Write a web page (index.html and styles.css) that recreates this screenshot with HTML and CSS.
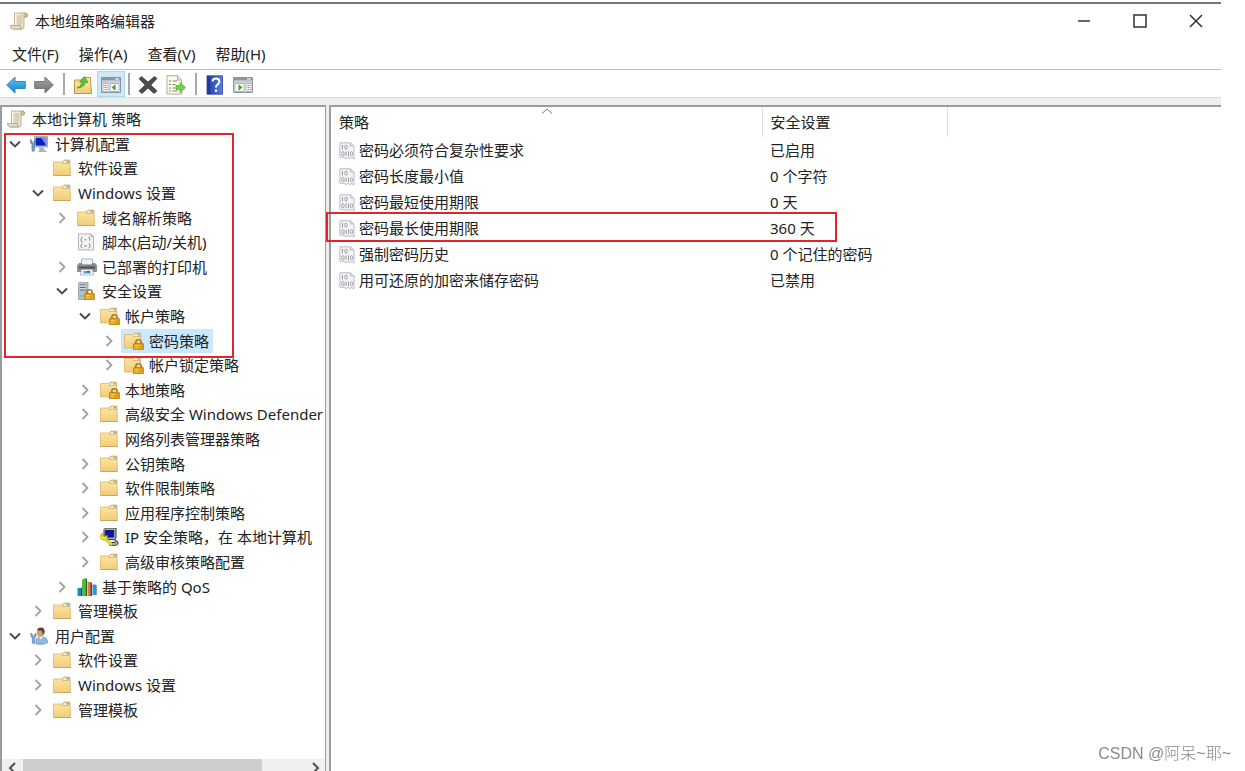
FILE: index.html
```html
<!DOCTYPE html>
<html lang="zh-CN">
<head>
  <meta charset="UTF-8" />
  <meta name="viewport" content="width=device-width, initial-scale=1" />
  <title>本地组策略编辑器</title>
  <link rel="stylesheet" href="styles.css">
</head>
<body>

  <!-- Shared icons -->
  <svg class="sprite" aria-hidden="true">
    <defs>
      <linearGradient id="g-folder" x1="0" y1="0" x2="0" y2="1">
        <stop offset="0" stop-color="#ffe7a6" /><stop offset="1" stop-color="#f2cc78" />
      </linearGradient>
      <linearGradient id="g-paper" x1="0" y1="0" x2="1" y2="0">
        <stop offset="0" stop-color="#fffdf3" /><stop offset="1" stop-color="#e6d5ad" />
      </linearGradient>
      <linearGradient id="g-blue" x1="0" y1="0" x2="0" y2="1">
        <stop offset="0" stop-color="#5cc4f2" /><stop offset="1" stop-color="#1287d0" />
      </linearGradient>
      <linearGradient id="g-gray" x1="0" y1="0" x2="0" y2="1">
        <stop offset="0" stop-color="#a8a8a8" /><stop offset="1" stop-color="#6e6e6e" />
      </linearGradient>
      <linearGradient id="g-help" x1="0" y1="0" x2="1" y2="0">
        <stop offset="0" stop-color="#1f3da8" /><stop offset="1" stop-color="#5c80e0" />
      </linearGradient>
      <symbol id="i-scroll" viewBox="0 0 18 18">
        <path d="M4.500 1h11q2 0 2 2t-1.500 2H14v9.500q0 2.500-2.500 2.500H3.500l1-3z" fill="url(#g-paper)" stroke="#b3a078" stroke-width=".8" />
        <path d="M14 5V3q0-2 1.500-2t2 2-1.500 2z" fill="#d8c188" stroke="#a89163" stroke-width=".6" />
        <path d="M.5 13.500h10q0 3.500 1.500 3.500H3Q.5 17 .5 13.500z" fill="#e5ddc8" stroke="#a99c80" stroke-width=".8" />
        <path d="M6.500 4h5.500M6.500 6h5.500M6.500 8h5.500M6.500 10h5.500M6.500 12h4.500" stroke="#a9a493" stroke-width=".8" />
      </symbol>
      <symbol id="i-folder" viewBox="0 0 18 18">
        <path d="M.5 3h8.500l2-2h6v3l.5 12.500H.5z" fill="url(#g-folder)" stroke="#dcb56a" stroke-width=".8" />
        <path d="M9.500 3.500l1.500-2h5.500v3H9z" fill="#f7edcf" stroke="#c5a15b" stroke-width=".6" />
        <path d="M13.500 2.800h2.500" stroke="#4aa3c7" stroke-width="1.200" />
        <path d="M.5 16.500h17" stroke="#c9a562" />
      </symbol>
      <symbol id="i-lock" viewBox="0 0 10 11">
        <path d="M2.500 6V3.500a2.500 2.500 0 0 1 5 0V6" fill="none" stroke="#9b7420" stroke-width="1.300" />
        <rect x=".5" y="4.500" width="9" height="6" rx=".5" fill="#dfa31c" stroke="#a9770c" stroke-width=".7" />
        <path d="M1.500 6.500h4M1.500 8.500h3" stroke="#ffd870" stroke-width=".8" />
      </symbol>
      <symbol id="i-folder-lock" viewBox="0 0 20 18">
        <path d="M.5 2.500h8l2-1.500h6v3l.5 12H.5z" fill="url(#g-folder)" stroke="#dcb56a" stroke-width=".8" />
        <path d="M9.500 3.500l1.500-2h5.500v3H9z" fill="#f7edcf" stroke="#c5a15b" stroke-width=".6" />
        <path d="M13.500 2.800h2" stroke="#4aa3c7" stroke-width="1.200" />
        <use href="#i-lock" x="9" y="6.500" width="11" height="12" />
      </symbol>
      <symbol id="i-server" viewBox="0 0 18 18">
        <path d="M1.500 1l2-1h7.500v14l-2 3.500H1.500z" fill="#b4c2cc" stroke="#8794a0" stroke-width=".7" />
        <path d="M3 3h5.500M3 5.500h5.500M3 8h5.500" stroke="#566977" stroke-width="1.100" />
        <path d="M3 4h5.500M3 6.500h5.500" stroke="#e7eff4" stroke-width=".7" />
        <path d="M3 14h3" stroke="#51c3dd" stroke-width="1.500" />
        <use href="#i-lock" x="7" y="6.500" width="11" height="12" />
      </symbol>
      <symbol id="i-computer" viewBox="0 0 18 18">
        <path d="M4.500 1.500h13v10.500h-13z" fill="#cdd7e4" stroke="#8b96a8" stroke-width=".8" />
        <path d="M5.700 2.700h10.600v8H5.700z" fill="#0b1fc4" />
        <path d="M11 2.700h5.300v8z" fill="#7688ee" />
        <path d="M9 12.500h5v2l3.500 2.500H8l1.500-2z" fill="#aab4c0" />
        <path d="M.7 4.500V8L2 9.500v6q1.200 2 2.400 0v-6L5.700 8V4.500L4.300 6v2H2.100V6z" fill="#7ba5ce" stroke="#456e98" stroke-width=".7" />
      </symbol>
      <symbol id="i-script" viewBox="0 0 18 18">
        <path d="M1.500 1H14l2.500 2.500V17H1.500z" fill="#f5f5f6" stroke="#aaaaad" stroke-width=".9" />
        <path d="M14 1v2.500h2.500" fill="none" stroke="#999" stroke-width=".7" />
        <path d="M5.500 4q-1.500 0-1 2l-1 .8 1 .8q-.5 1.900 1 1.900M11.500 4q1.500 0 1 2l1 .8-1 .8M7.500 6.800h2M5.500 11q-1.500 0-1.300 1.300l-.8.700.8.700q0 1.300 1.300 1.300M11.500 11q1.500 0 1.300 1.300l.8.700-.8.700q0 1.300-1.300 1.300M7 13h3" fill="none" stroke="#777" stroke-width=".9" />
      </symbol>
      <symbol id="i-printer" viewBox="0 0 20 18">
        <path d="M4.500 1h11v6h-11z" fill="#eef4f7" stroke="#9aa3a9" stroke-width=".8" />
        <path d="M2 5.500h2.500V7h11V5.500H18l1.500 2v6H.5v-6z" fill="#8a9094" stroke="#6d7275" stroke-width=".7" />
        <path d="M2 8.500h16v2H2z" fill="#4b5052" />
        <path d="M4.500 11.500h11l1 5.500h-13z" fill="#f3f9fc" stroke="#9aa3a9" stroke-width=".7" />
        <path d="M6.500 13h7v2.500h-7z" fill="#58a7c8" />
        <path d="M10 13h3v1.500h-3z" fill="#286d8d" />
      </symbol>
      <symbol id="i-ipsec" viewBox="0 0 20 18">
        <path d="M4 1.500L5.500 0H16v10l-1.500 1.500H4z" fill="#aeb1b6" stroke="#383b42" />
        <path d="M5.700 2.500h8v6.500h-8z" fill="#0a12c8" stroke="#161838" />
        <path d="M15 11.500l3 2.500v2l-2.500 1.500H10v-3h5z" fill="#a8a9a8" stroke="#484a4c" />
        <path d="M.5 8.500q0-3.500 3-3.500l-.7 3 2 .7L7 7q1 2-.5 3.500l6.500 5.500-1.500 1.800L5 12Q.5 12.500.5 8.500z" fill="#f6ed1c" stroke="#9b9611" stroke-width=".7" />
      </symbol>
      <symbol id="i-qos" viewBox="0 0 20 18">
        <path d="M.5 10h4v8h-4z" fill="#1688cc" /><path d="M4 9.500l1.500.8V18H4z" fill="#094770" />
        <path d="M5 1.500L8.500 0v18H5z" fill="#53ba48" /><path d="M8.500 0l1.500 1v17H8.500z" fill="#18632c" />
        <path d="M10.500 4h3.500v14h-3.500z" fill="#ec7445" /><path d="M13.500 4l1.500 1v13h-1.500z" fill="#81341d" />
        <path d="M15.500 6.500h3V17h-3z" fill="#269be0" /><path d="M18.500 6.500l1 1V17h-1z" fill="#0b4772" />
      </symbol>
      <symbol id="i-user" viewBox="0 0 18 18">
        <path d="M6 17q-.5-7 4-7h2q5.500 0 5.500 5.500Q15 18 6 17z" fill="#8bbbe3" stroke="#5c8bb6" stroke-width=".7" />
        <path d="M9 10l2 2.500 2-3z" fill="#f4f8fb" />
        <ellipse cx="10" cy="5.700" rx="3" ry="4.300" fill="#d6a071" />
        <path d="M7 3.500Q7.500.4 11 .4q4.300 0 3.600 5.600L12.500 9q.5-5-1.500-5.500z" fill="#5b432f" />
        <path d="M1 6v3.500L2.300 11v5q1.200 1.700 2.400 0v-5L6 9.500V6L4.600 7.300v1.900H2.400V7.300z" fill="#86abd0" stroke="#4e7499" stroke-width=".6" />
      </symbol>
      <symbol id="i-policy" viewBox="0 0 16 18">
        <path d="M1 .8h10.500L15 4v13.200l-2-1.700-2 1-2-1-2 1-2-1.500-2 .7L.8 15z" fill="#f3f3f5" stroke="#b4b4b8" stroke-width=".9" />
        <path d="M11.500.8V4H15" fill="#ddd" stroke="#b4b4b8" stroke-width=".7" />
        <path d="M3.500 3v4.500M9.500 9.500V14" stroke="#9c9ca8" />
        <ellipse cx="7" cy="5.200" rx="1.300" ry="2" fill="none" stroke="#9c9ca8" stroke-width=".9" />
        <ellipse cx="3.900" cy="11.700" rx="1.300" ry="2" fill="none" stroke="#9c9ca8" stroke-width=".9" />
        <path d="M7 9.500V14" stroke="#9c9ca8" />
        <ellipse cx="12.500" cy="11.700" rx="1.200" ry="2" fill="none" stroke="#9c9ca8" stroke-width=".9" />
      </symbol>
      <symbol id="i-open" viewBox="0 0 16 16">
        <path d="M3 5.500l5 5 5-5" fill="none" stroke="#484848" stroke-width="1.900" />
      </symbol>
      <symbol id="i-closed" viewBox="0 0 16 16">
        <path d="M5.500 3L10.500 8l-5 5" fill="none" stroke="#a0a0a0" stroke-width="1.800" />
      </symbol>
    </defs>
  </svg>

  <div class="window">
    <header class="titlebar">
      <svg class="icon"><use href="#i-scroll" /></svg>
      <h1>本地组策略编辑器</h1>
      <div class="window-buttons">
        <button type="button" aria-label="最小化"><svg viewBox="0 0 14 14"><path d="M1 7h12" /></svg></button>
        <button type="button" aria-label="最大化"><svg viewBox="0 0 14 14"><path d="M1 1h12v12H1z" /></svg></button>
        <button type="button" aria-label="关闭"><svg viewBox="0 0 14 14"><path d="M1 1l12 12M13 1L1 13" /></svg></button>
      </div>
    </header>

    <nav class="menubar">
      <button type="button">文件(F)</button>
      <button type="button">操作(A)</button>
      <button type="button">查看(V)</button>
      <button type="button">帮助(H)</button>
    </nav>

    <div class="toolbar">
      <button type="button" aria-label="后退">
        <svg viewBox="0 0 20 20"><path d="M.7 10L9 2v4.500h10.300v7H9V18z" fill="url(#g-blue)" stroke="#2b82b8" stroke-width=".9" /></svg>
      </button>
      <button type="button" aria-label="前进">
        <svg viewBox="0 0 20 20"><path d="M19.300 10L11 2v4.500H.7v7H11V18z" fill="url(#g-gray)" stroke="#707070" stroke-width=".9" /></svg>
      </button>
      <span class="separator"></span>
      <button type="button" aria-label="上一级">
        <svg viewBox="0 0 20 20">
          <path d="M1.500 5h7l2-2.500h7v3l1 13h-17z" fill="url(#g-folder)" stroke="#b98c3c" stroke-width=".9" />
          <path d="M4 13q4-1 5-6L6.500 7 11.500 1.500 15 7.500l-2.500-.3Q11 13 4 13z" fill="#5ac23b" stroke="#2f8a22" stroke-width=".6" />
        </svg>
      </button>
      <button type="button" class="active" aria-label="显示/隐藏控制台树">
        <svg viewBox="0 0 20 20">
          <path d="M.5 2.500h19v15H.5z" fill="#e8ecef" stroke="#8c949b" />
          <path d="M1 3h18v2.500H1z" fill="#8d979e" /><path d="M14 4h4" stroke="#fff" />
          <path d="M1 7h18" stroke="#a7afb6" />
          <path d="M2 8.500h5v8H2zM9 8.500h9v8H9z" fill="#fff" stroke="#9da5ab" stroke-width=".8" />
          <path d="M3.500 10.500h2M3.500 12.500h2M3.500 14.500h2" stroke="#4b93c1" />
          <path d="M14.500 9.300v6.500L10.500 12.500z" fill="#38a62a" />
        </svg>
      </button>
      <span class="separator"></span>
      <button type="button" aria-label="删除">
        <svg viewBox="0 0 20 20"><path d="M3.500 1.500L10 7l6.500-5.500 2.500 2L12.800 10l6.200 6-3 2.500-6-5.500-6 5.500L1 16l6.200-6L1 3.700z" fill="#4c4c4c" stroke="#333" stroke-width=".7" /></svg>
      </button>
      <button type="button" aria-label="导出列表">
        <svg viewBox="0 0 20 20">
          <path d="M1 .8h10.500L15.500 5v14H1z" fill="#fdfbe9" stroke="#a8a48d" stroke-width=".9" />
          <path d="M11.500.8V5h4" fill="#e8e3c9" stroke="#a8a48d" stroke-width=".8" />
          <path d="M3 6h2M3 9.500h2M3 13h2M3 16h2M6.500 6h5M6.500 9.500h3M6.500 13h3M6.500 16h5" stroke="#81817c" />
          <path d="M10 10.500h4v-3l5.500 5-5.500 5v-3h-4z" fill="#6fd547" stroke="#47a62a" stroke-width=".7" />
        </svg>
      </button>
      <span class="separator"></span>
      <button type="button" aria-label="帮助">
        <svg viewBox="0 0 20 20">
          <path d="M2 .8h15.500v18.400H2z" fill="url(#g-help)" stroke="#213b8f" stroke-width=".8" />
          <path d="M4.200 1v18" stroke="#18318e" />
          <path d="M7.500 6.500Q7.700 3.500 11 3.500t3.300 3Q14.300 8.300 12.500 9.500 11 10.500 11 12.500" fill="none" stroke="#fff" stroke-width="2" />
          <circle cx="11" cy="15.700" r="1.300" fill="#fff" />
        </svg>
      </button>
      <button type="button" aria-label="显示/隐藏操作窗格">
        <svg viewBox="0 0 20 20">
          <path d="M.5 2.500h19v15H.5z" fill="#e8ecef" stroke="#8c949b" />
          <path d="M1 3h18v2.500H1z" fill="#8d979e" /><path d="M14 4h4" stroke="#fff" />
          <path d="M1 7h18" stroke="#a7afb6" />
          <path d="M2 8.500h9v8H2zM13 8.500h5v8h-5z" fill="#fff" stroke="#9da5ab" stroke-width=".8" />
          <path d="M14.500 10.500h2M14.500 12.500h2M14.500 14.500h2" stroke="#4b93c1" />
          <path d="M5.500 9.300v6.500l4-3.300z" fill="#38a62a" />
        </svg>
      </button>
    </div>

    <main class="panes">
      <!-- Console tree -->
      <section class="tree-pane">
        <ul class="tree">
          <li class="root"><span class="item"><svg class="icon"><use href="#i-scroll" /></svg>本地计算机 策略</span></li>
          <li class="level-1"><button type="button" class="toggle" aria-label="折叠"><svg><use href="#i-open" /></svg></button><span class="item"><svg class="icon"><use href="#i-computer" /></svg>计算机配置</span></li>
          <li class="level-2 leaf"><span class="item"><svg class="icon"><use href="#i-folder" /></svg>软件设置</span></li>
          <li class="level-2"><button type="button" class="toggle" aria-label="折叠"><svg><use href="#i-open" /></svg></button><span class="item"><svg class="icon"><use href="#i-folder" /></svg>Windows 设置</span></li>
          <li class="level-3"><button type="button" class="toggle" aria-label="展开"><svg><use href="#i-closed" /></svg></button><span class="item"><svg class="icon"><use href="#i-folder" /></svg>域名解析策略</span></li>
          <li class="level-3 leaf"><span class="item"><svg class="icon"><use href="#i-script" /></svg>脚本(启动/关机)</span></li>
          <li class="level-3"><button type="button" class="toggle" aria-label="展开"><svg><use href="#i-closed" /></svg></button><span class="item"><svg class="icon wide"><use href="#i-printer" /></svg>已部署的打印机</span></li>
          <li class="level-3"><button type="button" class="toggle" aria-label="折叠"><svg><use href="#i-open" /></svg></button><span class="item"><svg class="icon"><use href="#i-server" /></svg>安全设置</span></li>
          <li class="level-4"><button type="button" class="toggle" aria-label="折叠"><svg><use href="#i-open" /></svg></button><span class="item"><svg class="icon wide"><use href="#i-folder-lock" /></svg>帐户策略</span></li>
          <li class="level-5"><button type="button" class="toggle" aria-label="展开"><svg><use href="#i-closed" /></svg></button><span class="item selected"><svg class="icon wide"><use href="#i-folder-lock" /></svg>密码策略</span></li>
          <li class="level-5"><button type="button" class="toggle" aria-label="展开"><svg><use href="#i-closed" /></svg></button><span class="item"><svg class="icon wide"><use href="#i-folder-lock" /></svg>帐户锁定策略</span></li>
          <li class="level-4"><button type="button" class="toggle" aria-label="展开"><svg><use href="#i-closed" /></svg></button><span class="item"><svg class="icon wide"><use href="#i-folder-lock" /></svg>本地策略</span></li>
          <li class="level-4"><button type="button" class="toggle" aria-label="展开"><svg><use href="#i-closed" /></svg></button><span class="item"><svg class="icon"><use href="#i-folder" /></svg>高级安全 Windows Defender</span></li>
          <li class="level-4 leaf"><span class="item"><svg class="icon"><use href="#i-folder" /></svg>网络列表管理器策略</span></li>
          <li class="level-4"><button type="button" class="toggle" aria-label="展开"><svg><use href="#i-closed" /></svg></button><span class="item"><svg class="icon"><use href="#i-folder" /></svg>公钥策略</span></li>
          <li class="level-4"><button type="button" class="toggle" aria-label="展开"><svg><use href="#i-closed" /></svg></button><span class="item"><svg class="icon"><use href="#i-folder" /></svg>软件限制策略</span></li>
          <li class="level-4"><button type="button" class="toggle" aria-label="展开"><svg><use href="#i-closed" /></svg></button><span class="item"><svg class="icon"><use href="#i-folder" /></svg>应用程序控制策略</span></li>
          <li class="level-4"><button type="button" class="toggle" aria-label="展开"><svg><use href="#i-closed" /></svg></button><span class="item"><svg class="icon wide"><use href="#i-ipsec" /></svg>IP 安全策略，在 本地计算机</span></li>
          <li class="level-4"><button type="button" class="toggle" aria-label="展开"><svg><use href="#i-closed" /></svg></button><span class="item"><svg class="icon"><use href="#i-folder" /></svg>高级审核策略配置</span></li>
          <li class="level-3"><button type="button" class="toggle" aria-label="展开"><svg><use href="#i-closed" /></svg></button><span class="item"><svg class="icon wide"><use href="#i-qos" /></svg>基于策略的 QoS</span></li>
          <li class="level-2"><button type="button" class="toggle" aria-label="展开"><svg><use href="#i-closed" /></svg></button><span class="item"><svg class="icon"><use href="#i-folder" /></svg>管理模板</span></li>
          <li class="level-1"><button type="button" class="toggle" aria-label="折叠"><svg><use href="#i-open" /></svg></button><span class="item"><svg class="icon"><use href="#i-user" /></svg>用户配置</span></li>
          <li class="level-2"><button type="button" class="toggle" aria-label="展开"><svg><use href="#i-closed" /></svg></button><span class="item"><svg class="icon"><use href="#i-folder" /></svg>软件设置</span></li>
          <li class="level-2"><button type="button" class="toggle" aria-label="展开"><svg><use href="#i-closed" /></svg></button><span class="item"><svg class="icon"><use href="#i-folder" /></svg>Windows 设置</span></li>
          <li class="level-2"><button type="button" class="toggle" aria-label="展开"><svg><use href="#i-closed" /></svg></button><span class="item"><svg class="icon"><use href="#i-folder" /></svg>管理模板</span></li>
        </ul>
        <div class="scrollbar">
          <button type="button" aria-label="向左滚动"><svg viewBox="0 0 16 16"><path d="M10 3L5 8l5 5" /></svg></button>
          <div class="track"><div class="thumb"></div></div>
          <button type="button" aria-label="向右滚动"><svg viewBox="0 0 16 16"><path d="M6 3l5 5-5 5" /></svg></button>
        </div>
      </section>

      <!-- Policy list -->
      <section class="list-pane">
        <table>
          <thead>
            <tr>
              <th class="col-name">策略<svg class="sort" viewBox="0 0 12 6"><path d="M1 5.500l5-4.500 5 4.500" /></svg></th>
              <th class="col-value">安全设置</th>
              <th></th>
            </tr>
          </thead>
          <tbody>
            <tr><td><svg class="policy"><use href="#i-policy" /></svg>密码必须符合复杂性要求</td><td>已启用</td><td></td></tr>
            <tr><td><svg class="policy"><use href="#i-policy" /></svg>密码长度最小值</td><td>0 个字符</td><td></td></tr>
            <tr><td><svg class="policy"><use href="#i-policy" /></svg>密码最短使用期限</td><td>0 天</td><td></td></tr>
            <tr><td><svg class="policy"><use href="#i-policy" /></svg>密码最长使用期限</td><td>360 天</td><td></td></tr>
            <tr><td><svg class="policy"><use href="#i-policy" /></svg>强制密码历史</td><td>0 个记住的密码</td><td></td></tr>
            <tr><td><svg class="policy"><use href="#i-policy" /></svg>用可还原的加密来储存密码</td><td>已禁用</td><td></td></tr>
          </tbody>
        </table>
      </section>

      <div class="mark mark-tree"></div>
      <div class="mark mark-row"></div>
    </main>
  </div>

  <div class="watermark">CSDN @阿呆~耶~</div>

</body>
</html>
```
FILE: styles.css
```css
* {
  box-sizing: border-box;
}
body {
  margin: 0;
  background-color: #fff;
  color: #222;
  font-family: "Noto Sans", "Noto Sans CJK SC", sans-serif;
  font-size: 15px;
  line-height: 24px;
}
button {
  display: flex;
  align-items: center;
  justify-content: center;
  padding: 0;
  border: none;
  background: none;
  color: inherit;
  font: inherit;
}
svg {
  display: block;
  flex: none;
}
.sprite {
  position: absolute;
  width: 0;
  height: 0;
}
.icon {
  width: 18px;
  height: 18px;
}
.icon.wide {
  width: 20px;
  margin-right: -2px;
}

/* Window frame */
.window {
  display: flex;
  flex-direction: column;
  height: 100vh;
  margin-right: 24px;
  padding-top: 2px;
  overflow: hidden;
}
.titlebar {
  display: flex;
  align-items: center;
  gap: 7px;
  height: 36px;
  padding-left: 10px;
  border-top: 2px solid #6c767d;
}
.titlebar h1 {
  margin: 0;
  font-size: 15px;
  font-weight: normal;
}
.window-buttons {
  display: flex;
  margin-left: auto;
}
.window-buttons button {
  width: 56px;
  height: 32px;
}
.window-buttons button:last-child {
  width: 53px;
  padding-left: 2px;
}
.window-buttons svg {
  width: 14px;
  height: 14px;
  fill: none;
  stroke: #333;
  stroke-width: 1.5;
}
.menubar {
  display: flex;
  gap: 20px;
  height: 32px;
  padding-left: 12px;
  border-bottom: 1px solid #bdbdbd;
}
.toolbar {
  display: flex;
  align-items: center;
  height: 27px;
  padding-left: 2px;
}
.toolbar button {
  width: 28px;
  height: 26px;
  padding-top: 2px;
}
.toolbar button svg {
  width: 20px;
  height: 20px;
}
.toolbar button.active {
  background-color: #cce8ff;
  border: 1px solid #b0d8f5;
}
.toolbar .separator {
  width: 2px;
  height: 22px;
  margin: 0 4px 0 5px;
  background-color: #a8a8a8;
}
.toolbar .active + .separator {
  margin-left: 3px;
}

/* Panes */
.panes {
  position: relative;
  display: flex;
  flex: 1;
  gap: 3px;
  min-height: 0;
  padding-top: 7px;
  background-color: #eee;
  border-top: 1px solid #ddd;
}
.tree-pane {
  display: flex;
  flex-direction: column;
  flex: none;
  width: 326px;
  overflow: hidden;
  background-color: #fff;
  border: 2px solid #9a9da0;
  border-right-width: 1px;
  border-bottom: none;
}
.tree {
  display: flex;
  flex-direction: column;
  flex: none;
  height: 615px;
  margin: 0 0 37px;
  padding: 0;
  overflow: hidden;
  list-style: none;
}
.tree li {
  display: flex;
  flex: 1;
  align-items: center;
  white-space: nowrap;
}
.toggle {
  width: 16px;
  height: 16px;
  margin-right: 7px;
}
.toggle svg {
  width: 16px;
  height: 16px;
}
.item {
  display: flex;
  align-items: center;
  gap: 7px;
  padding-right: 4px;
}
.item.selected {
  margin-left: -3px;
  padding-left: 3px;
  background-color: #cce8ff;
}
.root,
.level-1 {
  padding-left: 5px;
}
.level-2 {
  padding-left: 28px;
}
.level-3 {
  padding-left: 52px;
}
.level-4 {
  padding-left: 75px;
}
.level-5 {
  padding-left: 99px;
}
.leaf .item {
  margin-left: 23px;
}
.scrollbar {
  display: flex;
  flex: none;
  height: 18px;
  background-color: #f0f0f0;
}
.scrollbar button {
  width: 21px;
}
.scrollbar svg {
  width: 16px;
  height: 16px;
  fill: none;
  stroke: #505050;
  stroke-width: 2;
}
.scrollbar .track {
  flex: 1;
}
.scrollbar .thumb {
  width: 85%;
  height: 100%;
  background-color: #cdcdcd;
}
.list-pane {
  flex: 1;
  min-width: 0;
  background-color: #fff;
  border-top: 2px solid #9a9da0;
  border-left: 2px solid #9a9da0;
}
table {
  width: 100%;
  border-collapse: collapse;
  table-layout: fixed;
}
th,
td {
  height: 26px;
  padding: 0 0 0 8px;
  font-weight: normal;
  text-align: left;
  white-space: nowrap;
}
th {
  position: relative;
  height: 30px;
  border-right: 1px solid #ddd;
}
th:last-child {
  border-right: none;
}
.col-name {
  width: 431px;
}
.col-value {
  width: 185px;
}
.sort {
  position: absolute;
  top: 1px;
  left: calc(50% - 5px);
  width: 12px;
  height: 6px;
  fill: none;
  stroke: #777;
}
.policy {
  display: inline-block;
  width: 16px;
  height: 18px;
  margin-right: 4px;
  vertical-align: text-bottom;
}

/* Red boxes drawn over the panes */
.mark {
  position: absolute;
  border: 2px solid #e0262c;
  pointer-events: none;
}
.mark-tree {
  top: 35px;
  left: 4px;
  width: 230px;
  height: 225px;
}
.mark-row {
  top: 114px;
  left: 326px;
  width: 511px;
  height: 30px;
}
.watermark {
  position: fixed;
  right: 14px;
  bottom: 5px;
  color: #8a8a8a;
  font-family: "Liberation Sans", "Noto Sans CJK SC", sans-serif;
  font-size: 16px;
  font-weight: 300;
}
```
